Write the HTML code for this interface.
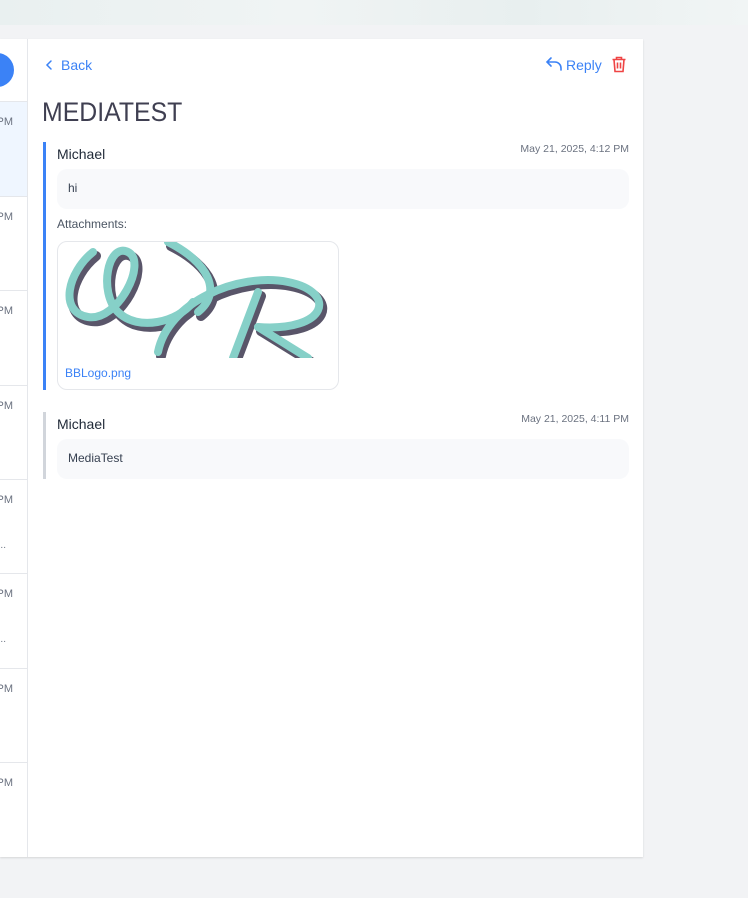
<!DOCTYPE html>
<html><head><style>
*{margin:0;padding:0;box-sizing:border-box}
body{width:748px;height:898px;background:#f2f3f5;font-family:"Liberation Sans",sans-serif;position:relative;overflow:hidden}
.top{position:absolute;left:0;top:0;width:748px;height:25px;background:linear-gradient(90deg,#e9f0f0,#f0f4f4 40%,#e8efef 70%,#f1f5f5)}
.panel{position:absolute;left:0;top:39px;width:643px;height:818px;background:#fff;box-shadow:0 1px 2px rgba(0,0,0,.12)}
.side{position:absolute;left:0;top:0;width:28px;height:818px;border-right:1px solid #e5e7eb}
.row{position:absolute;left:0;width:27px;border-top:1px solid #e5e7eb;font-size:11px;color:#6b7280}
.row span{position:absolute;right:14px;top:14px}
.row i{position:absolute;right:21px;font-style:normal;top:60px;font-size:10px}
.a{position:absolute;color:#3b82f6;font-size:14px}
.t{position:absolute;left:42px;top:97px;font-size:27px;letter-spacing:0;color:#3f3f51;font-family:"Liberation Sans",sans-serif;transform:scaleX(0.92);transform-origin:left}
.msg{position:absolute;left:43px;width:586px}
.bar{position:absolute;left:0;top:0;width:3px;bottom:0}
.name{position:absolute;left:14px;top:4px;font-size:14px;color:#1f2937}
.date{position:absolute;right:0;top:1px;font-size:10.5px;color:#6b7280}
.bub{position:absolute;left:14px;right:0;height:40px;background:#f8f9fb;border-radius:10px;font-size:12px;color:#374151;padding:12px 11px}
</style></head><body>
<div class="top"></div>
<div class="panel">
 <div class="side">
  <div style="position:absolute;left:-20px;top:14px;width:34px;height:34px;border-radius:50%;background:#3b82f6"></div>
  <div class="row" style="top:62px;height:95px;background:#eff6ff"><span>PM</span></div>
  <div class="row" style="top:157px;height:94px"><span>PM</span></div>
  <div class="row" style="top:251px;height:95px"><span>PM</span></div>
  <div class="row" style="top:346px;height:94px"><span>PM</span></div>
  <div class="row" style="top:440px;height:94px"><span>PM</span><i>...</i></div>
  <div class="row" style="top:534px;height:95px"><span>PM</span><i>...</i></div>
  <div class="row" style="top:629px;height:94px"><span>PM</span></div>
  <div class="row" style="top:723px;height:95px"><span>PM</span></div>
 </div>
 <svg style="position:absolute;left:45px;top:20px" width="8" height="12" viewBox="0 0 8 12" fill="none" stroke="#3b82f6" stroke-width="1.5" stroke-linecap="round"><path d="M6 2L2 6l4 4"/></svg>
 <div class="a" style="left:61px;top:18px">Back</div>
 <svg style="position:absolute;left:545px;top:17px" width="18" height="16" viewBox="0 0 18 16" fill="none" stroke="#3b82f6" stroke-width="1.6" stroke-linecap="round"><path d="M6 2L2 6l4 4M2 6h8a6 6 0 0 1 6 6v2"/></svg>
 <div class="a" style="left:566px;top:18px">Reply</div>
 <svg style="position:absolute;left:611px;top:17px" width="16" height="17" viewBox="0 0 16 17" fill="none" stroke="#ef4444" stroke-width="1.6"><path d="M1.5 3.5h13M5.5 3.5V1.5h5v2M3 3.5l1 12h8l1-12M6.5 6.5v6M9.5 6.5v6"/></svg>
</div>
<div class="t">MEDIATEST</div>
<div class="msg" style="top:142px;height:248px"><div class="bar" style="background:#3b82f6"></div>
 <div class="name">Michael</div><div class="date">May 21, 2025, 4:12 PM</div>
 <div class="bub" style="top:27px">hi</div>
 <div style="position:absolute;left:14px;top:75px;font-size:12px;color:#4b5563">Attachments:</div>
 <div style="position:absolute;left:14px;top:99px;width:282px;height:149px;border:1px solid #e5e7eb;border-radius:10px;overflow:hidden">
  <svg width="282" height="116" viewBox="0 0 282 116" fill="none" stroke-linecap="round">
   <g stroke="#3d3850" stroke-width="10" opacity=".85" transform="translate(3,4)">
    <path d="M35 10C10 30 0 70 30 75C60 80 90 20 70 10C50 0 40 50 60 70C80 90 120 80 135 60"/>
    <path d="M110 0C150 20 165 50 140 70"/>
    <path d="M100 110C110 60 180 30 230 40C280 50 270 90 200 85"/>
    <path d="M200 50L175 116M200 85L250 116"/>
   </g>
   <g stroke="#86d0c8" stroke-width="8">
    <path d="M35 10C10 30 0 70 30 75C60 80 90 20 70 10C50 0 40 50 60 70C80 90 120 80 135 60"/>
    <path d="M110 0C150 20 165 50 140 70"/>
    <path d="M100 110C110 60 180 30 230 40C280 50 270 90 200 85"/>
    <path d="M200 50L175 116M200 85L250 116"/>
   </g>
  </svg>
  <div style="position:absolute;left:7px;top:124px;font-size:12px;color:#3b82f6">BBLogo.png</div>
 </div>
</div>
<div class="msg" style="top:412px;height:67px"><div class="bar" style="background:#d1d5db"></div>
 <div class="name">Michael</div><div class="date">May 21, 2025, 4:11 PM</div>
 <div class="bub" style="top:27px">MediaTest</div>
</div>
</body></html>
